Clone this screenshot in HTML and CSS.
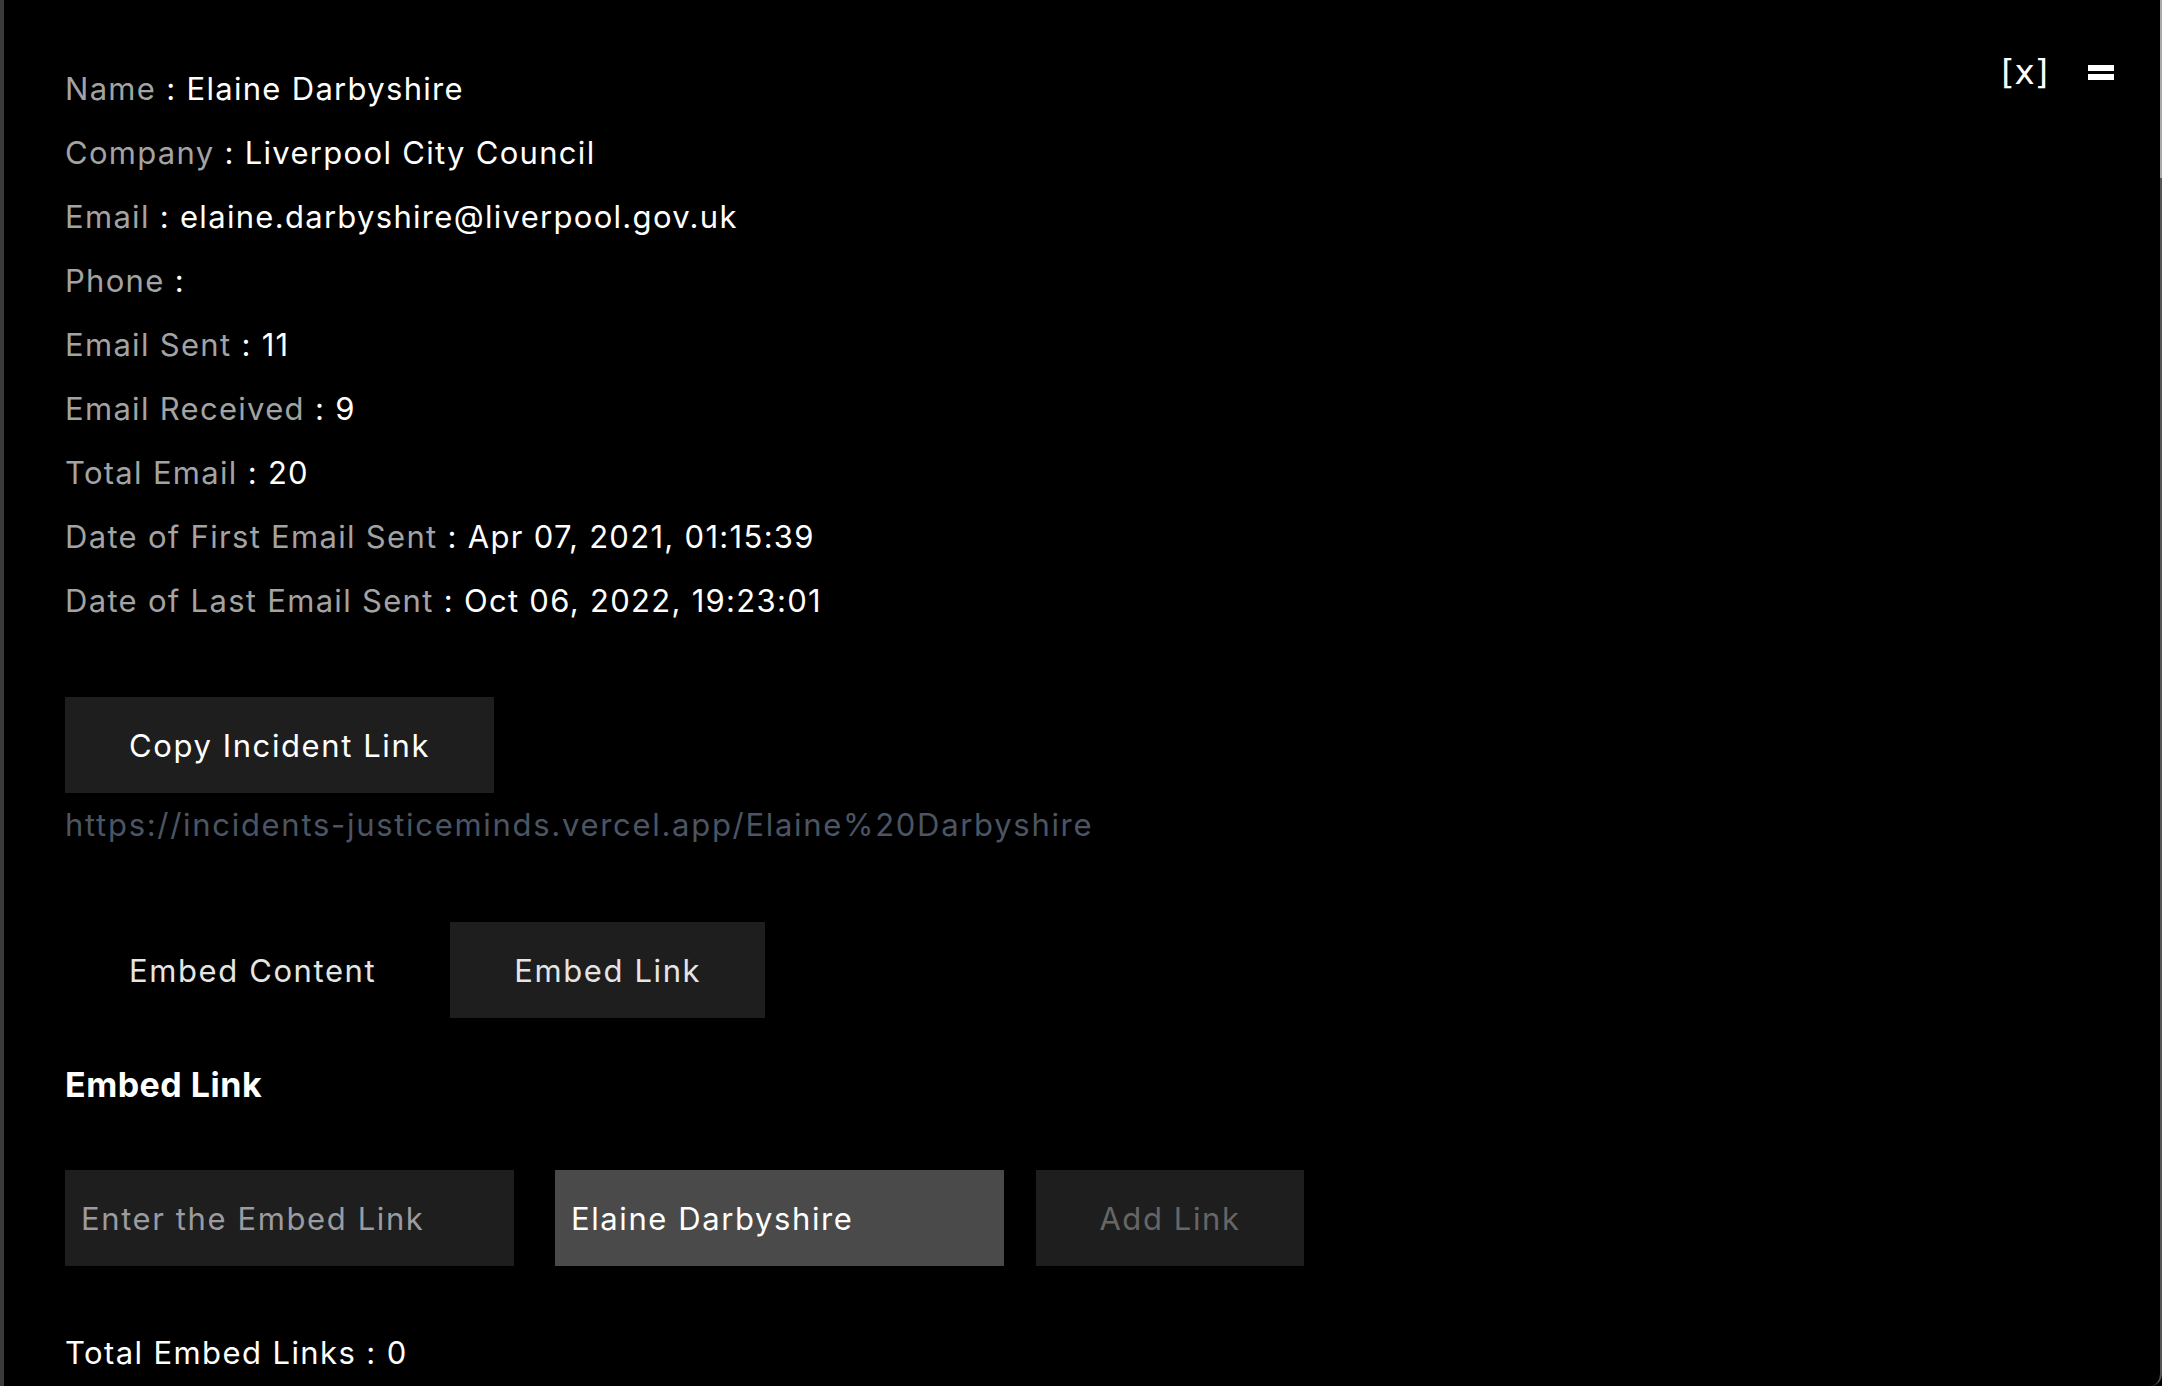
FILE: index.html
```html
<!DOCTYPE html>
<html lang="en">
<head>
    <meta charset="UTF-8">
    <meta name="viewport" content="width=device-width, initial-scale=1.0">
    <title>Elaine Darbyshire</title>
    <link rel="stylesheet" href="styles.css">
</head>
<body>
    <div id="panel">
        <div class="scroll-thumb"></div>
        <div class="panel-top">
            <div id="details">
                <p class="row"><span class="label">Name</span> : Elaine Darbyshire</p>
                <p class="row"><span class="label">Company</span> : Liverpool City Council</p>
                <p class="row"><span class="label">Email</span> : elaine.darbyshire@liverpool.gov.uk</p>
                <p class="row"><span class="label">Phone</span> : </p>
                <p class="row"><span class="label">Email Sent</span> : 11</p>
                <p class="row"><span class="label">Email Received</span> : 9</p>
                <p class="row"><span class="label">Total Email</span> : 20</p>
                <p class="row"><span class="label">Date of First Email Sent</span> : Apr 07, 2021, 01:15:39</p>
                <p class="row"><span class="label">Date of Last Email Sent</span> : Oct 06, 2022, 19:23:01</p>
            </div>
            <div class="panel-actions">
                <button class="icon-btn close-btn">[x]</button>
                <button class="icon-btn menu-btn"><span></span><span></span></button>
            </div>
        </div>

        <button id="copy-link" class="dark-btn">Copy Incident Link</button>
        <p class="incident-url">https://incidents-justiceminds.vercel.app/Elaine%20Darbyshire</p>

        <div class="tabs">
            <button class="tab">Embed Content</button>
            <button class="tab active">Embed Link</button>
        </div>

        <h3 class="section-title">Embed Link</h3>

        <div class="embed-form">
            <input type="text" class="embed-input" placeholder="Enter the Embed Link">
            <input type="text" class="embed-input name-input" value="Elaine Darbyshire">
            <button class="dark-btn add-btn">Add Link</button>
        </div>

        <p class="total">Total Embed Links : 0</p>
    </div>
</body>
</html>
```

FILE: styles.css
```css
body {
    margin: 0;
    background: #000;
    color: #fff;
    font-family: Inter, "Noto Sans", sans-serif;
    letter-spacing: 1.6px;
    height: 1386px;
    overflow: hidden;
}
#panel {
    position: relative;
    box-sizing: border-box;
    height: 1386px;
    border-left: 4px solid #3a3a3a;
    border-right: 2px solid #555;
    border-bottom-right-radius: 12px;
    padding: 57px 0 0 61px;
    font-size: 31px;
}
.scroll-thumb {
    position: absolute;
    top: 0;
    right: -2px;
    width: 2px;
    height: 178px;
    background: #aaa;
}
.panel-top {
    display: flex;
    justify-content: space-between;
    align-items: flex-start;
}
.row {
    margin: 0;
    line-height: 64px;
    letter-spacing: 1.3px;
    color: #fff;
}
.label {
    color: #a3a3a3;
}
.panel-actions {
    display: flex;
    align-items: center;
    gap: 40px;
    margin-right: 46px;
    margin-top: -1px;
}
.icon-btn {
    background: none;
    border: none;
    color: #fff;
    padding: 0;
    cursor: pointer;
    letter-spacing: 0;
    font-family: "DejaVu Sans", sans-serif;
}
.close-btn {
    font-size: 34px;
    line-height: 32px;
}
.menu-btn {
    display: flex;
    flex-direction: column;
    gap: 3px;
}
.menu-btn span {
    display: block;
    width: 26px;
    height: 6px;
    background: #fff;
}
.dark-btn {
    background: #1e1e1e;
    color: #fff;
    border: none;
    font-family: inherit;
    font-size: 31px;
    letter-spacing: inherit;
    cursor: pointer;
}
#copy-link {
    display: block;
    margin-top: 64px;
    height: 96px;
    padding: 0 64px;
}
.incident-url {
    margin: 0;
    line-height: 64px;
    letter-spacing: 1.7px;
    color: #4b5563;
}
.tabs {
    display: flex;
    gap: 10px;
    margin-top: 65px;
}
.tab {
    height: 96px;
    padding: 0 64px;
    background: none;
    border: none;
    color: #e5e5e5;
    font-family: inherit;
    font-size: 31px;
    letter-spacing: inherit;
    cursor: pointer;
}
.tab.active {
    background: #1e1e1e;
}
.section-title {
    margin: 35px 0 0;
    font-size: 34px;
    font-weight: 700;
    letter-spacing: 0.5px;
    line-height: 64px;
}
.embed-form {
    display: flex;
    align-items: center;
    margin-top: 53px;
}
.embed-input {
    box-sizing: border-box;
    width: 449px;
    height: 96px;
    padding: 0 16px;
    border: none;
    outline: none;
    background: #1e1e1e;
    color: #fff;
    font-family: inherit;
    font-size: 31px;
    letter-spacing: inherit;
}
.embed-input::placeholder {
    color: #9b9ba0;
}
.name-input {
    margin-left: 41px;
    background: #4a4a4a;
}
.add-btn {
    width: 268px;
    height: 96px;
    margin-left: 32px;
    color: #666;
}
.total {
    margin: 55px 0 0;
    line-height: 64px;
    letter-spacing: 1.4px;
}
```
